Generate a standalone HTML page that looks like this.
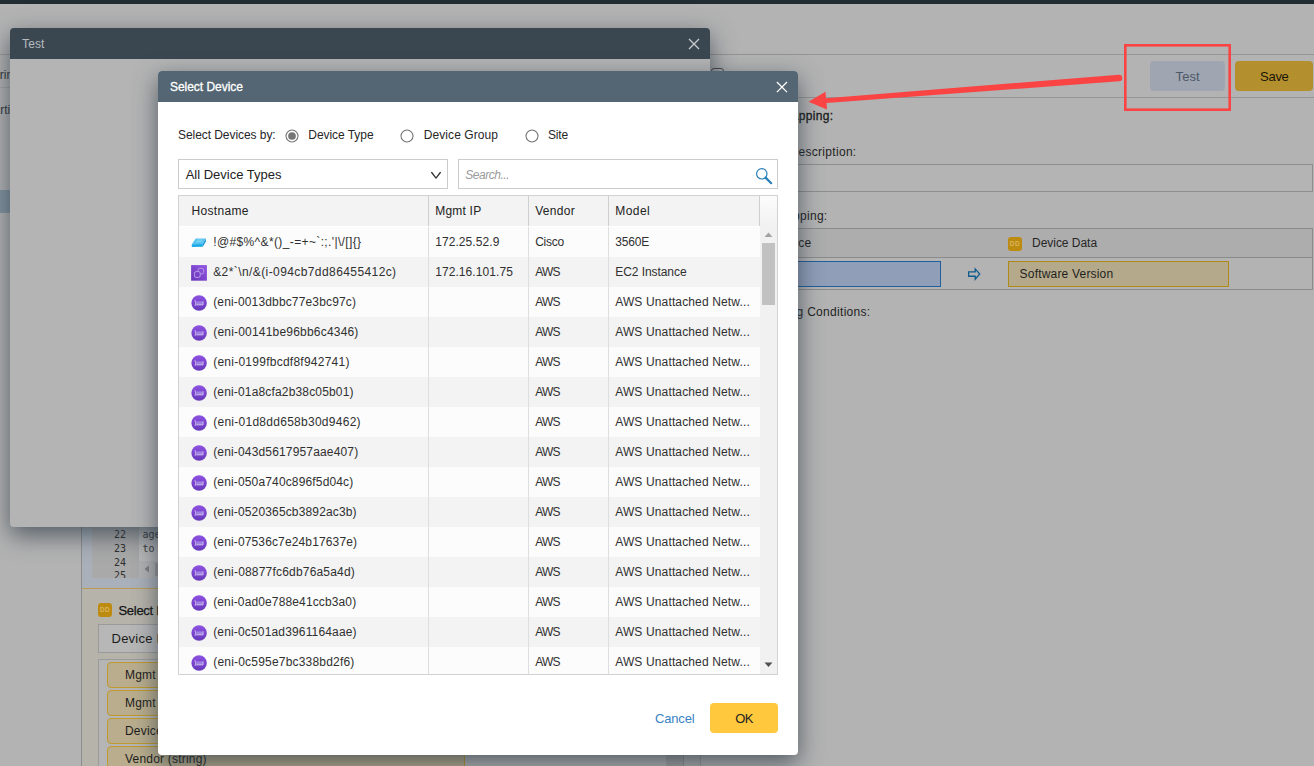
<!DOCTYPE html>
<html lang="en"><head><meta charset="utf-8"><title>Select Device</title><style>
html,body{margin:0;padding:0;}
body{width:1314px;height:766px;overflow:hidden;background:#b3b3b3;position:relative;font-family:"Liberation Sans",sans-serif;}
.b{position:absolute;display:block;}
.t{position:absolute;white-space:pre;line-height:20px;height:20px;}
</style></head>
<body>
<div class="b" style="left:0px;top:0px;width:1314px;height:4px;background:#222c33;"></div>
<div class="b" style="left:0px;top:54px;width:12px;height:1px;background:#999;"></div>
<div class="b" style="left:0px;top:87px;width:12px;height:1px;background:#a4a4a4;"></div>
<span class="t" id="t1" style="left:-11.5px;top:65px;font-size:12px;color:#30343c;">String</span>
<span class="t" id="t2" style="left:-14.5px;top:100px;font-size:12px;color:#30343c;">Partition</span>
<div class="b" style="left:0px;top:190px;width:12px;height:23px;background:#8395a1;"></div>
<div class="b" style="left:700px;top:54px;width:614px;height:1px;background:#959595;"></div>
<div class="b" style="left:700px;top:97px;width:614px;height:1px;background:#959595;"></div>
<div class="b" style="left:700px;top:55px;width:1px;height:711px;background:#9a9a9a;"></div>
<div class="b" style="left:711px;top:68px;width:13px;height:12px;border:1px solid #4a4a4a;border-radius:3px;box-sizing:border-box;"></div>
<div class="b" style="left:1150px;top:61px;width:75px;height:30px;background:#9fa6b2;border-radius:4px;"></div>
<span class="t" id="t3" style="left:1175.6px;top:67px;font-size:13px;color:#4c5866;letter-spacing:0.04px;">Test</span>
<div class="b" style="left:1235px;top:61px;width:78px;height:30px;background:#b38f2e;border-radius:4px;"></div>
<span class="t" id="t4" style="left:1260px;top:67px;font-size:13px;color:#1c1708;letter-spacing:-0.26px;">Save</span>
<span class="t" id="t5" style="right:480.5px;top:106px;font-size:12px;color:#1a1a1a;letter-spacing:0.35px;-webkit-text-stroke:0.3px #1a1a1a;">Mapping:</span>
<span class="t" id="t6" style="right:457.5px;top:142px;font-size:12px;color:#1f1f1f;letter-spacing:0.3px;">Description:</span>
<div class="b" style="left:720px;top:164px;width:593px;height:28px;border:1px solid #8e8e8e;box-sizing:border-box;background:#b4b4b4;"></div>
<span class="t" id="t7" style="right:486.5px;top:206px;font-size:12px;color:#1f1f1f;letter-spacing:0.3px;">Mapping:</span>
<div class="b" style="left:720px;top:228px;width:593px;height:30px;border:1px solid #8b8b8b;box-sizing:border-box;background:#adadad;"></div>
<div class="b" style="left:720px;top:258px;width:593px;height:32px;border:1px solid #8b8b8b;border-top:none;box-sizing:border-box;background:#b3b3b3;"></div>
<span class="t" id="t8" style="right:502.5px;top:233px;font-size:12px;color:#1f1f1f;letter-spacing:0.3px;">Source</span>
<div class="b" style="left:740px;top:261px;width:201px;height:26px;border:1px solid #1f5f9e;box-sizing:border-box;background:#909eb8;"></div>
<svg class="b" style="left:967px;top:267px" width="14" height="14" viewBox="0 0 14 14"><path d="M1.65 4.85H8.2V1.9L12.7 7.05L8.2 12.2V9.25H1.65Z" fill="none" stroke="#115c8e" stroke-width="1.3" stroke-linejoin="miter"/></svg>
<div class="b" style="left:1008px;top:237px;width:14px;height:14px;background:#bd8b10;border-radius:3px;"></div>
<span class="t" id="t9" style="left:1009.8px;top:234.4px;font-size:6.5px;color:#d9b45c;font-weight:bold;letter-spacing:0.5px;">DD</span>
<span class="t" id="t10" style="left:1032px;top:233px;font-size:12px;color:#262626;letter-spacing:-0.03px;">Device Data</span>
<div class="b" style="left:1008px;top:261px;width:221px;height:26px;border:1px solid #b08a16;box-sizing:border-box;background:#b4aa8b;"></div>
<span class="t" id="t11" style="left:1019.6px;top:264px;font-size:12px;color:#1f1f1f;letter-spacing:0.19px;">Software Version</span>
<span class="t" id="t12" style="right:443.5px;top:302px;font-size:12px;color:#1f1f1f;letter-spacing:0.3px;">Filtering Conditions:</span>
<div class="b" style="left:81px;top:100px;width:603px;height:489px;background:#aab0b9;border-left:1px solid #8c8c8c;box-sizing:border-box;"></div>
<div class="b" style="left:81px;top:589px;width:603px;height:177px;background:#b6b3aa;border-left:1px solid #8c8c8c;box-sizing:border-box;"></div>
<div class="b" style="left:82px;top:588px;width:602px;height:1px;background:#ba9c56;"></div>
<div class="b" style="left:666px;top:100px;width:17px;height:666px;background:#a3a3a3;"></div>
<div class="b" style="left:683px;top:55px;width:1px;height:711px;background:#8f8f8f;"></div>
<div class="b" style="left:684px;top:55px;width:16px;height:711px;background:#aeaeae;"></div>
<div class="b" style="left:92px;top:300px;width:47px;height:278px;background:#a9a9a9;"></div>
<div class="b" style="left:139px;top:300px;width:527px;height:261px;background:#bababa;"></div>
<div class="b" style="left:139px;top:561px;width:527px;height:17px;background:#b1b1b1;"></div>
<svg class="b" style="left:143px;top:564px" width="8" height="10" viewBox="0 0 8 10"><path d="M6 1.5v7L1.5 5z" fill="#7d7d7d"/></svg>
<div class="b" style="left:155px;top:563px;width:200px;height:13px;background:#989898;"></div>
<div class="b" style="left:92px;top:520px;width:574px;height:58px;overflow:hidden;">
<span class="t" id="t13" style="left:22px;top:5.0px;font-size:10px;color:#2e2e2e;font-family:&quot;DejaVu Sans Mono&quot;,&quot;Liberation Mono&quot;,monospace;">22</span>
<span class="t" id="t14" style="left:50.5px;top:5.0px;font-size:10px;color:#383838;font-family:&quot;DejaVu Sans Mono&quot;,&quot;Liberation Mono&quot;,monospace;">agent</span>
<span class="t" id="t15" style="left:22px;top:18.75px;font-size:10px;color:#2e2e2e;font-family:&quot;DejaVu Sans Mono&quot;,&quot;Liberation Mono&quot;,monospace;">23</span>
<span class="t" id="t16" style="left:50.5px;top:18.75px;font-size:10px;color:#383838;font-family:&quot;DejaVu Sans Mono&quot;,&quot;Liberation Mono&quot;,monospace;">to</span>
<span class="t" id="t17" style="left:22px;top:32.5px;font-size:10px;color:#2e2e2e;font-family:&quot;DejaVu Sans Mono&quot;,&quot;Liberation Mono&quot;,monospace;">24</span>
<span class="t" id="t18" style="left:22px;top:46.25px;font-size:10px;color:#2e2e2e;font-family:&quot;DejaVu Sans Mono&quot;,&quot;Liberation Mono&quot;,monospace;">25</span>
</div>
<div class="b" style="left:98px;top:603px;width:14px;height:14px;background:#bd8b10;border-radius:3px;"></div>
<span class="t" id="t19" style="left:99.9px;top:600.4px;font-size:6.5px;color:#d9b45c;font-weight:bold;letter-spacing:0.5px;">DD</span>
<span class="t" id="t20" style="left:118.5px;top:600.5px;font-size:13px;color:#141414;-webkit-text-stroke:0.25px #141414;letter-spacing:-0.3px;">Select Device Data</span>
<div class="b" style="left:98px;top:623.5px;width:560px;height:29px;border:1px solid #9a9a9a;box-sizing:border-box;background:#b7b7b7;"></div>
<span class="t" id="t21" style="left:111.5px;top:628.5px;font-size:13px;color:#1c1c1c;letter-spacing:0.25px;">Device Property</span>
<div class="b" style="left:98px;top:659px;width:568px;height:110px;border:1px solid #9a9a9a;border-right:none;box-sizing:border-box;background:#b5b5b5;"></div>
<div class="b" style="left:107px;top:662px;width:358px;height:26px;border:1px solid #bf9a2c;border-radius:4px;box-sizing:border-box;background:#b9ad8d;"></div>
<span class="t" id="t22" style="left:125px;top:665px;font-size:12px;color:#1c1c1c;letter-spacing:0.2px;">Mgmt IP (string)</span>
<div class="b" style="left:107px;top:690px;width:358px;height:26px;border:1px solid #bf9a2c;border-radius:4px;box-sizing:border-box;background:#b9ad8d;"></div>
<span class="t" id="t23" style="left:125px;top:693px;font-size:12px;color:#1c1c1c;letter-spacing:0.2px;">Mgmt Interface (string)</span>
<div class="b" style="left:107px;top:718px;width:358px;height:26px;border:1px solid #bf9a2c;border-radius:4px;box-sizing:border-box;background:#b9ad8d;"></div>
<span class="t" id="t24" style="left:125px;top:721px;font-size:12px;color:#1c1c1c;letter-spacing:0.2px;">Device Type (string)</span>
<div class="b" style="left:107px;top:746px;width:358px;height:26px;border:1px solid #bf9a2c;border-radius:4px;box-sizing:border-box;background:#b9ad8d;"></div>
<span class="t" id="t25" style="left:125px;top:749px;font-size:12px;color:#1c1c1c;letter-spacing:0.2px;">Vendor (string)</span>
<div class="b" style="left:10px;top:28px;width:700px;height:499px;background:#b4b4b4;border-radius:4px;box-shadow:0 8px 24px rgba(38,52,64,.7);overflow:hidden;"><div style="height:31px;background:#3b4750;"></div></div>
<span class="t" id="t26" style="left:22px;top:34.2px;font-size:12px;color:#b6bcc0;letter-spacing:0.15px;">Test</span>
<svg class="b" style="left:688px;top:38px" width="12" height="12" viewBox="0 0 12 12"><path d="M1 1l10 10M11 1L1 11" stroke="#c9cdd0" stroke-width="1.3" fill="none"/></svg>
<div class="b" style="left:158px;top:71px;width:640px;height:684px;background:#fff;border-radius:4px;box-shadow:0 8px 24px rgba(38,52,64,.7);overflow:hidden;"><div style="height:31px;background:#546673;"></div></div>
<span class="t" id="t27" style="left:170px;top:77px;font-size:12px;color:#fff;letter-spacing:-0.04px;-webkit-text-stroke:0.3px #fff;">Select Device</span>
<svg class="b" style="left:776px;top:81px" width="12" height="12" viewBox="0 0 12 12"><path d="M0.9 1l10.1 10.1M11 1L0.9 11.1" stroke="#fff" stroke-width="1.3" fill="none"/></svg>
<span class="t" id="t28" style="left:178px;top:125px;font-size:12px;color:#262626;letter-spacing:-0.06px;">Select Devices by:</span>
<svg class="b" style="left:283.5px;top:127.5px" width="16" height="16" viewBox="0 0 16 16"><circle cx="8" cy="8" r="6" fill="#fff" stroke="#727272" stroke-width="1.05"/><circle cx="8" cy="8" r="3.85" fill="#767676"/></svg>
<span class="t" id="t29" style="left:308.3px;top:125px;font-size:12px;color:#262626;letter-spacing:-0.05px;">Device Type</span>
<svg class="b" style="left:399.3px;top:127.5px" width="16" height="16" viewBox="0 0 16 16"><circle cx="8" cy="8" r="6" fill="#fff" stroke="#727272" stroke-width="1.05"/></svg>
<span class="t" id="t30" style="left:423.8px;top:125px;font-size:12px;color:#262626;letter-spacing:0.07px;">Device Group</span>
<svg class="b" style="left:524.4px;top:127.5px" width="16" height="16" viewBox="0 0 16 16"><circle cx="8" cy="8" r="6" fill="#fff" stroke="#727272" stroke-width="1.05"/></svg>
<span class="t" id="t31" style="left:547.9px;top:125px;font-size:12px;color:#262626;letter-spacing:-0.15px;">Site</span>
<div class="b" style="left:178px;top:159px;width:270px;height:30px;border:1px solid #ccc;box-sizing:border-box;background:#fff;"></div>
<span class="t" id="t32" style="left:185.7px;top:164.5px;font-size:13px;color:#222;letter-spacing:-0.01px;">All Device Types</span>
<svg class="b" style="left:430px;top:171px" width="12" height="9" viewBox="0 0 12 9"><path d="M1.7 1.5L6 7.1L10.3 1.5" stroke="#333" stroke-width="1.3" stroke-linecap="round" stroke-linejoin="round" fill="none"/></svg>
<div class="b" style="left:458px;top:159px;width:320px;height:30px;border:1px solid #ccc;box-sizing:border-box;background:#fff;"></div>
<span class="t" id="t33" style="left:465.3px;top:164.5px;font-size:12px;color:#9a9a9a;font-style:italic;letter-spacing:-0.48px;">Search...</span>
<svg class="b" style="left:755px;top:167px" width="18" height="18" viewBox="0 0 18 18"><circle cx="6.8" cy="6.8" r="5.2" stroke="#2a7fb8" stroke-width="1.2" fill="none"/><path d="M10.6 10.6l5.6 5.6" stroke="#2a7fb8" stroke-width="2.2" stroke-linecap="round"/></svg>
<div class="b" style="left:178px;top:195px;width:600px;height:480px;border:1px solid #d2d2d2;box-sizing:border-box;background:#fff;"></div>
<div class="b" style="left:179px;top:196px;width:581px;height:30px;background:#f3f3f3;"></div>
<div class="b" style="left:760px;top:196px;width:17px;height:31px;background:linear-gradient(#fcfcfc,#f1f1f1);"></div>
<div class="b" style="left:428px;top:196px;width:1px;height:30px;background:#cfcfcf;"></div>
<div class="b" style="left:528px;top:196px;width:1px;height:30px;background:#cfcfcf;"></div>
<div class="b" style="left:608px;top:196px;width:1px;height:30px;background:#cfcfcf;"></div>
<div class="b" style="left:759px;top:196px;width:1px;height:30px;background:#cfcfcf;"></div>
<div class="b" style="left:428px;top:227px;width:1px;height:447px;background:#dedede;"></div>
<div class="b" style="left:528px;top:227px;width:1px;height:447px;background:#dedede;"></div>
<div class="b" style="left:608px;top:227px;width:1px;height:447px;background:#dedede;"></div>
<span class="t" id="t34" style="left:191.4px;top:201px;font-size:12px;color:#222;letter-spacing:0.34px;">Hostname</span>
<span class="t" id="t35" style="left:435.2px;top:201px;font-size:12px;color:#222;letter-spacing:0.22px;">Mgmt IP</span>
<span class="t" id="t36" style="left:535.2px;top:201px;font-size:12px;color:#222;letter-spacing:0.33px;">Vendor</span>
<span class="t" id="t37" style="left:615.2px;top:201px;font-size:12px;color:#222;letter-spacing:0.46px;">Model</span>
<div class="b" style="left:179px;top:227px;width:249px;height:30px;background:#fcfcfc;"></div>
<div class="b" style="left:429px;top:227px;width:99px;height:30px;background:#fcfcfc;"></div>
<div class="b" style="left:529px;top:227px;width:79px;height:30px;background:#fcfcfc;"></div>
<div class="b" style="left:609px;top:227px;width:151px;height:30px;background:#fcfcfc;"></div>
<svg class="b" style="left:191px;top:234px" width="16" height="16" viewBox="0 0 16 16"><path d="M4.7 4.6L14.9 4.5L11.8 9.9L0.8 10.2Z" fill="#56c4f0"/><path d="M6.2 6.1L11.6 6M5.2 7.6L10.4 7.5" stroke="#8fd9f6" stroke-width="0.8"/><path d="M0.8 10.2L11.8 9.9L11.8 12.8L0.8 13Z" fill="#19a9e8"/><path d="M14.9 4.5L14.9 7.6L11.8 12.8L11.8 9.9Z" fill="#1a97d4"/></svg>
<span class="t" id="t38" style="left:213.2px;top:231.5px;font-size:12px;color:#303030;letter-spacing:0.37px;">!@#$%^&amp;*()_-=+~`:;.&#x27;|\/[]{}</span>
<span class="t" id="t39" style="left:435.2px;top:231.5px;font-size:12px;color:#303030;letter-spacing:0.08px;">172.25.52.9</span>
<span class="t" id="t40" style="left:535.2px;top:231.5px;font-size:12px;color:#303030;letter-spacing:-0.26px;">Cisco</span>
<span class="t" id="t41" style="left:615.2px;top:231.5px;font-size:12px;color:#303030;letter-spacing:-0.18px;">3560E</span>
<div class="b" style="left:179px;top:257px;width:249px;height:30px;background:#f3f3f3;"></div>
<div class="b" style="left:429px;top:257px;width:99px;height:30px;background:#f3f3f3;"></div>
<div class="b" style="left:529px;top:257px;width:79px;height:30px;background:#f3f3f3;"></div>
<div class="b" style="left:609px;top:257px;width:151px;height:30px;background:#f3f3f3;"></div>
<svg class="b" style="left:191px;top:265px" width="16" height="16" viewBox="0 0 16 16"><defs><linearGradient id="ge1" x1="1" y1="0" x2="0" y2="1"><stop offset="0" stop-color="#9355e4"/><stop offset="1" stop-color="#6a38b8"/></linearGradient></defs><rect x="0.1" y="0.1" width="15.8" height="15.6" fill="url(#ge1)"/><rect x="7.1" y="3.3" width="5.5" height="5.6" rx="1.6" fill="none" stroke="#b79ee9" stroke-width="0.9"/><rect x="3.5" y="6.6" width="5.7" height="5.8" rx="1.6" fill="#7842c8" stroke="#bda6ec" stroke-width="0.9"/></svg>
<span class="t" id="t42" style="left:213.2px;top:261.5px;font-size:12px;color:#303030;letter-spacing:0.41px;">&amp;2*`\n/&amp;(i-094cb7dd86455412c)</span>
<span class="t" id="t43" style="left:435.2px;top:261.5px;font-size:12px;color:#303030;letter-spacing:0.08px;">172.16.101.75</span>
<span class="t" id="t44" style="left:535.2px;top:261.5px;font-size:12px;color:#303030;letter-spacing:-0.80px;">AWS</span>
<span class="t" id="t45" style="left:615.2px;top:261.5px;font-size:12px;color:#303030;letter-spacing:-0.06px;">EC2 Instance</span>
<div class="b" style="left:179px;top:287px;width:249px;height:30px;background:#fcfcfc;"></div>
<div class="b" style="left:429px;top:287px;width:99px;height:30px;background:#fcfcfc;"></div>
<div class="b" style="left:529px;top:287px;width:79px;height:30px;background:#fcfcfc;"></div>
<div class="b" style="left:609px;top:287px;width:151px;height:30px;background:#fcfcfc;"></div>
<svg class="b" style="left:191px;top:294.9px" width="16" height="16" viewBox="0 0 16 16"><defs><linearGradient id="gn2" x1="0" y1="0" x2="0" y2="1"><stop offset="0" stop-color="#8d52e2"/><stop offset="1" stop-color="#6739ba"/></linearGradient></defs><circle cx="8.1" cy="8" r="7.75" fill="url(#gn2)"/><rect x="5.3" y="6.4" width="6.7" height="3.7" fill="#a082e2"/><path d="M5.3 9.8H12.1V6.3" fill="none" stroke="#cdbcf1" stroke-width="0.9"/><path d="M4.0 5.2Q5.4 8 4.1 10.9" fill="none" stroke="#cdbcf1" stroke-width="0.9"/></svg>
<span class="t" id="t46" style="left:213.2px;top:291.5px;font-size:12px;color:#303030;letter-spacing:0.15px;">(eni-0013dbbc77e3bc97c)</span>
<span class="t" id="t47" style="left:535.2px;top:291.5px;font-size:12px;color:#303030;letter-spacing:-0.80px;">AWS</span>
<span class="t" id="t48" style="left:615.2px;top:291.5px;font-size:12px;color:#303030;letter-spacing:0.14px;">AWS Unattached Netw...</span>
<div class="b" style="left:179px;top:317px;width:249px;height:30px;background:#f3f3f3;"></div>
<div class="b" style="left:429px;top:317px;width:99px;height:30px;background:#f3f3f3;"></div>
<div class="b" style="left:529px;top:317px;width:79px;height:30px;background:#f3f3f3;"></div>
<div class="b" style="left:609px;top:317px;width:151px;height:30px;background:#f3f3f3;"></div>
<svg class="b" style="left:191px;top:324.9px" width="16" height="16" viewBox="0 0 16 16"><defs><linearGradient id="gn3" x1="0" y1="0" x2="0" y2="1"><stop offset="0" stop-color="#8d52e2"/><stop offset="1" stop-color="#6739ba"/></linearGradient></defs><circle cx="8.1" cy="8" r="7.75" fill="url(#gn3)"/><rect x="5.3" y="6.4" width="6.7" height="3.7" fill="#a082e2"/><path d="M5.3 9.8H12.1V6.3" fill="none" stroke="#cdbcf1" stroke-width="0.9"/><path d="M4.0 5.2Q5.4 8 4.1 10.9" fill="none" stroke="#cdbcf1" stroke-width="0.9"/></svg>
<span class="t" id="t49" style="left:213.2px;top:321.5px;font-size:12px;color:#303030;letter-spacing:0.20px;">(eni-00141be96bb6c4346)</span>
<span class="t" id="t50" style="left:535.2px;top:321.5px;font-size:12px;color:#303030;letter-spacing:-0.80px;">AWS</span>
<span class="t" id="t51" style="left:615.2px;top:321.5px;font-size:12px;color:#303030;letter-spacing:0.14px;">AWS Unattached Netw...</span>
<div class="b" style="left:179px;top:347px;width:249px;height:30px;background:#fcfcfc;"></div>
<div class="b" style="left:429px;top:347px;width:99px;height:30px;background:#fcfcfc;"></div>
<div class="b" style="left:529px;top:347px;width:79px;height:30px;background:#fcfcfc;"></div>
<div class="b" style="left:609px;top:347px;width:151px;height:30px;background:#fcfcfc;"></div>
<svg class="b" style="left:191px;top:354.9px" width="16" height="16" viewBox="0 0 16 16"><defs><linearGradient id="gn4" x1="0" y1="0" x2="0" y2="1"><stop offset="0" stop-color="#8d52e2"/><stop offset="1" stop-color="#6739ba"/></linearGradient></defs><circle cx="8.1" cy="8" r="7.75" fill="url(#gn4)"/><rect x="5.3" y="6.4" width="6.7" height="3.7" fill="#a082e2"/><path d="M5.3 9.8H12.1V6.3" fill="none" stroke="#cdbcf1" stroke-width="0.9"/><path d="M4.0 5.2Q5.4 8 4.1 10.9" fill="none" stroke="#cdbcf1" stroke-width="0.9"/></svg>
<span class="t" id="t52" style="left:213.2px;top:351.5px;font-size:12px;color:#303030;letter-spacing:0.25px;">(eni-0199fbcdf8f942741)</span>
<span class="t" id="t53" style="left:535.2px;top:351.5px;font-size:12px;color:#303030;letter-spacing:-0.80px;">AWS</span>
<span class="t" id="t54" style="left:615.2px;top:351.5px;font-size:12px;color:#303030;letter-spacing:0.14px;">AWS Unattached Netw...</span>
<div class="b" style="left:179px;top:377px;width:249px;height:30px;background:#f3f3f3;"></div>
<div class="b" style="left:429px;top:377px;width:99px;height:30px;background:#f3f3f3;"></div>
<div class="b" style="left:529px;top:377px;width:79px;height:30px;background:#f3f3f3;"></div>
<div class="b" style="left:609px;top:377px;width:151px;height:30px;background:#f3f3f3;"></div>
<svg class="b" style="left:191px;top:384.9px" width="16" height="16" viewBox="0 0 16 16"><defs><linearGradient id="gn5" x1="0" y1="0" x2="0" y2="1"><stop offset="0" stop-color="#8d52e2"/><stop offset="1" stop-color="#6739ba"/></linearGradient></defs><circle cx="8.1" cy="8" r="7.75" fill="url(#gn5)"/><rect x="5.3" y="6.4" width="6.7" height="3.7" fill="#a082e2"/><path d="M5.3 9.8H12.1V6.3" fill="none" stroke="#cdbcf1" stroke-width="0.9"/><path d="M4.0 5.2Q5.4 8 4.1 10.9" fill="none" stroke="#cdbcf1" stroke-width="0.9"/></svg>
<span class="t" id="t55" style="left:213.2px;top:381.5px;font-size:12px;color:#303030;letter-spacing:0.16px;">(eni-01a8cfa2b38c05b01)</span>
<span class="t" id="t56" style="left:535.2px;top:381.5px;font-size:12px;color:#303030;letter-spacing:-0.80px;">AWS</span>
<span class="t" id="t57" style="left:615.2px;top:381.5px;font-size:12px;color:#303030;letter-spacing:0.14px;">AWS Unattached Netw...</span>
<div class="b" style="left:179px;top:407px;width:249px;height:30px;background:#fcfcfc;"></div>
<div class="b" style="left:429px;top:407px;width:99px;height:30px;background:#fcfcfc;"></div>
<div class="b" style="left:529px;top:407px;width:79px;height:30px;background:#fcfcfc;"></div>
<div class="b" style="left:609px;top:407px;width:151px;height:30px;background:#fcfcfc;"></div>
<svg class="b" style="left:191px;top:414.9px" width="16" height="16" viewBox="0 0 16 16"><defs><linearGradient id="gn6" x1="0" y1="0" x2="0" y2="1"><stop offset="0" stop-color="#8d52e2"/><stop offset="1" stop-color="#6739ba"/></linearGradient></defs><circle cx="8.1" cy="8" r="7.75" fill="url(#gn6)"/><rect x="5.3" y="6.4" width="6.7" height="3.7" fill="#a082e2"/><path d="M5.3 9.8H12.1V6.3" fill="none" stroke="#cdbcf1" stroke-width="0.9"/><path d="M4.0 5.2Q5.4 8 4.1 10.9" fill="none" stroke="#cdbcf1" stroke-width="0.9"/></svg>
<span class="t" id="t58" style="left:213.2px;top:411.5px;font-size:12px;color:#303030;letter-spacing:0.27px;">(eni-01d8dd658b30d9462)</span>
<span class="t" id="t59" style="left:535.2px;top:411.5px;font-size:12px;color:#303030;letter-spacing:-0.80px;">AWS</span>
<span class="t" id="t60" style="left:615.2px;top:411.5px;font-size:12px;color:#303030;letter-spacing:0.14px;">AWS Unattached Netw...</span>
<div class="b" style="left:179px;top:437px;width:249px;height:30px;background:#f3f3f3;"></div>
<div class="b" style="left:429px;top:437px;width:99px;height:30px;background:#f3f3f3;"></div>
<div class="b" style="left:529px;top:437px;width:79px;height:30px;background:#f3f3f3;"></div>
<div class="b" style="left:609px;top:437px;width:151px;height:30px;background:#f3f3f3;"></div>
<svg class="b" style="left:191px;top:444.9px" width="16" height="16" viewBox="0 0 16 16"><defs><linearGradient id="gn7" x1="0" y1="0" x2="0" y2="1"><stop offset="0" stop-color="#8d52e2"/><stop offset="1" stop-color="#6739ba"/></linearGradient></defs><circle cx="8.1" cy="8" r="7.75" fill="url(#gn7)"/><rect x="5.3" y="6.4" width="6.7" height="3.7" fill="#a082e2"/><path d="M5.3 9.8H12.1V6.3" fill="none" stroke="#cdbcf1" stroke-width="0.9"/><path d="M4.0 5.2Q5.4 8 4.1 10.9" fill="none" stroke="#cdbcf1" stroke-width="0.9"/></svg>
<span class="t" id="t61" style="left:213.2px;top:441.5px;font-size:12px;color:#303030;letter-spacing:0.16px;">(eni-043d5617957aae407)</span>
<span class="t" id="t62" style="left:535.2px;top:441.5px;font-size:12px;color:#303030;letter-spacing:-0.80px;">AWS</span>
<span class="t" id="t63" style="left:615.2px;top:441.5px;font-size:12px;color:#303030;letter-spacing:0.14px;">AWS Unattached Netw...</span>
<div class="b" style="left:179px;top:467px;width:249px;height:30px;background:#fcfcfc;"></div>
<div class="b" style="left:429px;top:467px;width:99px;height:30px;background:#fcfcfc;"></div>
<div class="b" style="left:529px;top:467px;width:79px;height:30px;background:#fcfcfc;"></div>
<div class="b" style="left:609px;top:467px;width:151px;height:30px;background:#fcfcfc;"></div>
<svg class="b" style="left:191px;top:474.9px" width="16" height="16" viewBox="0 0 16 16"><defs><linearGradient id="gn8" x1="0" y1="0" x2="0" y2="1"><stop offset="0" stop-color="#8d52e2"/><stop offset="1" stop-color="#6739ba"/></linearGradient></defs><circle cx="8.1" cy="8" r="7.75" fill="url(#gn8)"/><rect x="5.3" y="6.4" width="6.7" height="3.7" fill="#a082e2"/><path d="M5.3 9.8H12.1V6.3" fill="none" stroke="#cdbcf1" stroke-width="0.9"/><path d="M4.0 5.2Q5.4 8 4.1 10.9" fill="none" stroke="#cdbcf1" stroke-width="0.9"/></svg>
<span class="t" id="t64" style="left:213.2px;top:471.5px;font-size:12px;color:#303030;letter-spacing:0.15px;">(eni-050a740c896f5d04c)</span>
<span class="t" id="t65" style="left:535.2px;top:471.5px;font-size:12px;color:#303030;letter-spacing:-0.80px;">AWS</span>
<span class="t" id="t66" style="left:615.2px;top:471.5px;font-size:12px;color:#303030;letter-spacing:0.14px;">AWS Unattached Netw...</span>
<div class="b" style="left:179px;top:497px;width:249px;height:30px;background:#f3f3f3;"></div>
<div class="b" style="left:429px;top:497px;width:99px;height:30px;background:#f3f3f3;"></div>
<div class="b" style="left:529px;top:497px;width:79px;height:30px;background:#f3f3f3;"></div>
<div class="b" style="left:609px;top:497px;width:151px;height:30px;background:#f3f3f3;"></div>
<svg class="b" style="left:191px;top:504.9px" width="16" height="16" viewBox="0 0 16 16"><defs><linearGradient id="gn9" x1="0" y1="0" x2="0" y2="1"><stop offset="0" stop-color="#8d52e2"/><stop offset="1" stop-color="#6739ba"/></linearGradient></defs><circle cx="8.1" cy="8" r="7.75" fill="url(#gn9)"/><rect x="5.3" y="6.4" width="6.7" height="3.7" fill="#a082e2"/><path d="M5.3 9.8H12.1V6.3" fill="none" stroke="#cdbcf1" stroke-width="0.9"/><path d="M4.0 5.2Q5.4 8 4.1 10.9" fill="none" stroke="#cdbcf1" stroke-width="0.9"/></svg>
<span class="t" id="t67" style="left:213.2px;top:501.5px;font-size:12px;color:#303030;letter-spacing:0.15px;">(eni-0520365cb3892ac3b)</span>
<span class="t" id="t68" style="left:535.2px;top:501.5px;font-size:12px;color:#303030;letter-spacing:-0.80px;">AWS</span>
<span class="t" id="t69" style="left:615.2px;top:501.5px;font-size:12px;color:#303030;letter-spacing:0.14px;">AWS Unattached Netw...</span>
<div class="b" style="left:179px;top:527px;width:249px;height:30px;background:#fcfcfc;"></div>
<div class="b" style="left:429px;top:527px;width:99px;height:30px;background:#fcfcfc;"></div>
<div class="b" style="left:529px;top:527px;width:79px;height:30px;background:#fcfcfc;"></div>
<div class="b" style="left:609px;top:527px;width:151px;height:30px;background:#fcfcfc;"></div>
<svg class="b" style="left:191px;top:534.9px" width="16" height="16" viewBox="0 0 16 16"><defs><linearGradient id="gn10" x1="0" y1="0" x2="0" y2="1"><stop offset="0" stop-color="#8d52e2"/><stop offset="1" stop-color="#6739ba"/></linearGradient></defs><circle cx="8.1" cy="8" r="7.75" fill="url(#gn10)"/><rect x="5.3" y="6.4" width="6.7" height="3.7" fill="#a082e2"/><path d="M5.3 9.8H12.1V6.3" fill="none" stroke="#cdbcf1" stroke-width="0.9"/><path d="M4.0 5.2Q5.4 8 4.1 10.9" fill="none" stroke="#cdbcf1" stroke-width="0.9"/></svg>
<span class="t" id="t70" style="left:213.2px;top:531.5px;font-size:12px;color:#303030;letter-spacing:0.14px;">(eni-07536c7e24b17637e)</span>
<span class="t" id="t71" style="left:535.2px;top:531.5px;font-size:12px;color:#303030;letter-spacing:-0.80px;">AWS</span>
<span class="t" id="t72" style="left:615.2px;top:531.5px;font-size:12px;color:#303030;letter-spacing:0.14px;">AWS Unattached Netw...</span>
<div class="b" style="left:179px;top:557px;width:249px;height:30px;background:#f3f3f3;"></div>
<div class="b" style="left:429px;top:557px;width:99px;height:30px;background:#f3f3f3;"></div>
<div class="b" style="left:529px;top:557px;width:79px;height:30px;background:#f3f3f3;"></div>
<div class="b" style="left:609px;top:557px;width:151px;height:30px;background:#f3f3f3;"></div>
<svg class="b" style="left:191px;top:564.9px" width="16" height="16" viewBox="0 0 16 16"><defs><linearGradient id="gn11" x1="0" y1="0" x2="0" y2="1"><stop offset="0" stop-color="#8d52e2"/><stop offset="1" stop-color="#6739ba"/></linearGradient></defs><circle cx="8.1" cy="8" r="7.75" fill="url(#gn11)"/><rect x="5.3" y="6.4" width="6.7" height="3.7" fill="#a082e2"/><path d="M5.3 9.8H12.1V6.3" fill="none" stroke="#cdbcf1" stroke-width="0.9"/><path d="M4.0 5.2Q5.4 8 4.1 10.9" fill="none" stroke="#cdbcf1" stroke-width="0.9"/></svg>
<span class="t" id="t73" style="left:213.2px;top:561.5px;font-size:12px;color:#303030;letter-spacing:0.19px;">(eni-08877fc6db76a5a4d)</span>
<span class="t" id="t74" style="left:535.2px;top:561.5px;font-size:12px;color:#303030;letter-spacing:-0.80px;">AWS</span>
<span class="t" id="t75" style="left:615.2px;top:561.5px;font-size:12px;color:#303030;letter-spacing:0.14px;">AWS Unattached Netw...</span>
<div class="b" style="left:179px;top:587px;width:249px;height:30px;background:#fcfcfc;"></div>
<div class="b" style="left:429px;top:587px;width:99px;height:30px;background:#fcfcfc;"></div>
<div class="b" style="left:529px;top:587px;width:79px;height:30px;background:#fcfcfc;"></div>
<div class="b" style="left:609px;top:587px;width:151px;height:30px;background:#fcfcfc;"></div>
<svg class="b" style="left:191px;top:594.9px" width="16" height="16" viewBox="0 0 16 16"><defs><linearGradient id="gn12" x1="0" y1="0" x2="0" y2="1"><stop offset="0" stop-color="#8d52e2"/><stop offset="1" stop-color="#6739ba"/></linearGradient></defs><circle cx="8.1" cy="8" r="7.75" fill="url(#gn12)"/><rect x="5.3" y="6.4" width="6.7" height="3.7" fill="#a082e2"/><path d="M5.3 9.8H12.1V6.3" fill="none" stroke="#cdbcf1" stroke-width="0.9"/><path d="M4.0 5.2Q5.4 8 4.1 10.9" fill="none" stroke="#cdbcf1" stroke-width="0.9"/></svg>
<span class="t" id="t76" style="left:213.2px;top:591.5px;font-size:12px;color:#303030;letter-spacing:0.13px;">(eni-0ad0e788e41ccb3a0)</span>
<span class="t" id="t77" style="left:535.2px;top:591.5px;font-size:12px;color:#303030;letter-spacing:-0.80px;">AWS</span>
<span class="t" id="t78" style="left:615.2px;top:591.5px;font-size:12px;color:#303030;letter-spacing:0.14px;">AWS Unattached Netw...</span>
<div class="b" style="left:179px;top:617px;width:249px;height:30px;background:#f3f3f3;"></div>
<div class="b" style="left:429px;top:617px;width:99px;height:30px;background:#f3f3f3;"></div>
<div class="b" style="left:529px;top:617px;width:79px;height:30px;background:#f3f3f3;"></div>
<div class="b" style="left:609px;top:617px;width:151px;height:30px;background:#f3f3f3;"></div>
<svg class="b" style="left:191px;top:624.9px" width="16" height="16" viewBox="0 0 16 16"><defs><linearGradient id="gn13" x1="0" y1="0" x2="0" y2="1"><stop offset="0" stop-color="#8d52e2"/><stop offset="1" stop-color="#6739ba"/></linearGradient></defs><circle cx="8.1" cy="8" r="7.75" fill="url(#gn13)"/><rect x="5.3" y="6.4" width="6.7" height="3.7" fill="#a082e2"/><path d="M5.3 9.8H12.1V6.3" fill="none" stroke="#cdbcf1" stroke-width="0.9"/><path d="M4.0 5.2Q5.4 8 4.1 10.9" fill="none" stroke="#cdbcf1" stroke-width="0.9"/></svg>
<span class="t" id="t79" style="left:213.2px;top:621.5px;font-size:12px;color:#303030;letter-spacing:0.16px;">(eni-0c501ad3961164aae)</span>
<span class="t" id="t80" style="left:535.2px;top:621.5px;font-size:12px;color:#303030;letter-spacing:-0.80px;">AWS</span>
<span class="t" id="t81" style="left:615.2px;top:621.5px;font-size:12px;color:#303030;letter-spacing:0.14px;">AWS Unattached Netw...</span>
<div class="b" style="left:179px;top:647px;width:249px;height:27px;background:#fcfcfc;"></div>
<div class="b" style="left:429px;top:647px;width:99px;height:27px;background:#fcfcfc;"></div>
<div class="b" style="left:529px;top:647px;width:79px;height:27px;background:#fcfcfc;"></div>
<div class="b" style="left:609px;top:647px;width:151px;height:27px;background:#fcfcfc;"></div>
<svg class="b" style="left:191px;top:654.9px" width="16" height="16" viewBox="0 0 16 16"><defs><linearGradient id="gn14" x1="0" y1="0" x2="0" y2="1"><stop offset="0" stop-color="#8d52e2"/><stop offset="1" stop-color="#6739ba"/></linearGradient></defs><circle cx="8.1" cy="8" r="7.75" fill="url(#gn14)"/><rect x="5.3" y="6.4" width="6.7" height="3.7" fill="#a082e2"/><path d="M5.3 9.8H12.1V6.3" fill="none" stroke="#cdbcf1" stroke-width="0.9"/><path d="M4.0 5.2Q5.4 8 4.1 10.9" fill="none" stroke="#cdbcf1" stroke-width="0.9"/></svg>
<span class="t" id="t82" style="left:213.2px;top:651.5px;font-size:12px;color:#303030;letter-spacing:0.20px;">(eni-0c595e7bc338bd2f6)</span>
<span class="t" id="t83" style="left:535.2px;top:651.5px;font-size:12px;color:#303030;letter-spacing:-0.80px;">AWS</span>
<span class="t" id="t84" style="left:615.2px;top:651.5px;font-size:12px;color:#303030;letter-spacing:0.14px;">AWS Unattached Netw...</span>
<div class="b" style="left:760px;top:227px;width:17px;height:447px;background:#f1f1f1;"></div>
<svg class="b" style="left:764px;top:231px" width="9" height="7" viewBox="0 0 9 7"><path d="M0.5 6L4.5 1.5L8.5 6z" fill="#a3a3a3"/></svg>
<div class="b" style="left:762px;top:243px;width:13px;height:62px;background:#c1c1c1;"></div>
<svg class="b" style="left:764px;top:661px" width="9" height="7" viewBox="0 0 9 7"><path d="M0.5 1.5L4.5 6L8.5 1.5z" fill="#505050"/></svg>
<span class="t" id="t85" style="left:654.9px;top:708.7px;font-size:13px;color:#3a83c4;letter-spacing:-0.14px;">Cancel</span>
<div class="b" style="left:710px;top:703px;width:68px;height:30px;background:#ffc83d;border-radius:4px;"></div>
<span class="t" id="t86" style="left:735.2px;top:708.7px;font-size:13px;color:#222;letter-spacing:-0.50px;">OK</span>
<svg class="b" style="left:0;top:0" width="1314" height="140" viewBox="0 0 1314 140"><rect x="1125.3" y="45.3" width="104.4" height="64.4" fill="none" stroke="#fa4444" stroke-width="2.6"/><path d="M1119 74.7 Q1122.4 74.9 1122.2 78.1 Q1122.4 81 1119.3 81.3 L826.5 103.0 L827 109.5 L808.5 101.8 L825.5 91.7 L826 98.2 Z" fill="#fa4444"/></svg>
</body></html>
